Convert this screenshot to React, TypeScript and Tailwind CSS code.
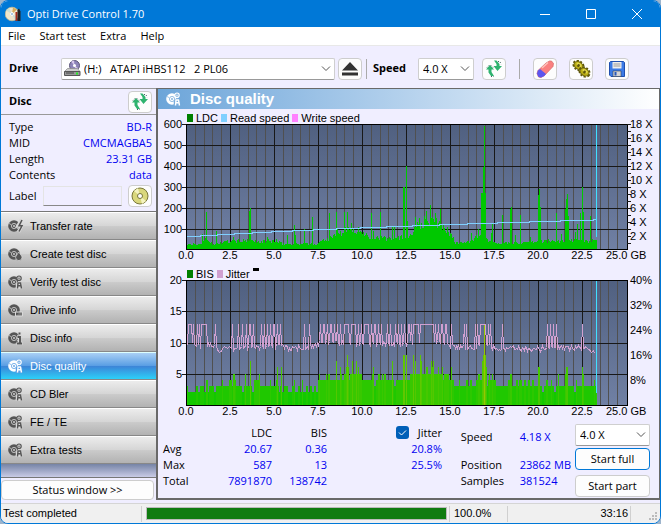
import type { ReactNode } from "react";

// Chart columns are one pixel wide, x counts from the left edge of the plot
type Point = [number, number];

const PLOT_W = 441;
const PLOT_H = 125;
const END = 411;

// small deterministic jitter, so that the bars look like measured data
const noise = (i: number) => {
  const n = Math.sin(i * 12.9898 + 4.1) * 43758.5453;
  return n - Math.floor(n);
};

const sample = (points: Point[], x: number) => {
  for (let i = 1; i < points.length; i++) {
    const [x0, y0] = points[i - 1];
    const [x1, y1] = points[i];
    if (x <= x1) return y0 + ((y1 - y0) * (x - x0)) / (x1 - x0);
  }
  return points[points.length - 1][1];
};

const ldcBase: Point[] = [
  [0, 4], [14, 5], [19, 11], [23, 8], [26, 4], [38, 7], [54, 8], [66, 8], [72, 7], [88, 8],
  [96, 5], [104, 5], [130, 5], [136, 9], [150, 13], [157, 18], [166, 18], [174, 18], [182, 13],
  [200, 10], [209, 13], [216, 12], [225, 15], [229, 26], [240, 27], [252, 26], [259, 18],
  [264, 17], [269, 6], [285, 7], [290, 12], [298, 13], [302, 8], [311, 6], [340, 6], [358, 8],
  [380, 8], [411, 8],
];

const ldcSpikes: Point[] = [
  [0, 60], [16, 15], [20, 37], [30, 18], [47, 12], [63, 38], [64, 41], [81, 12], [90, 10], [101, 14],
  [108, 24], [109, 14], [118, 20], [126, 32], [143, 36], [150, 37], [151, 20], [158, 37], [161, 37],
  [165, 26], [185, 36], [187, 18], [194, 37], [206, 23], [208, 22], [217, 62], [218, 62], [220, 83],
  [221, 28], [229, 30], [233, 31], [240, 38], [244, 44], [249, 36], [254, 40], [255, 25], [285, 16],
  [292, 20], [295, 56], [296, 56], [297, 82], [298, 123], [299, 56], [305, 16], [306, 26], [316, 34],
  [324, 40], [325, 42], [329, 14], [334, 34], [344, 12], [352, 54], [353, 60], [354, 42], [370, 36],
  [375, 15], [379, 40], [380, 50], [381, 55], [382, 33], [389, 17], [391, 25], [394, 36], [396, 62],
  [397, 37], [404, 33],
];

const bisBase: Point[] = [
  [0, 2], [12, 2.2], [28, 2.4], [40, 3], [90, 3.1], [98, 2.4], [131, 2.5], [133, 3.9], [149, 4],
  [155, 4.9], [176, 4.8], [182, 4], [214, 4], [225, 4.8], [236, 5.2], [262, 5], [267, 3.2],
  [287, 3.2], [296, 5], [302, 3.6], [313, 3.1], [350, 3], [362, 3], [411, 3.1],
];

const bisSpikes: Point[] = [
  [0, 5], [20, 4], [21, 4], [36, 4], [43, 4], [47, 5], [48, 5], [59, 5], [64, 7], [73, 5], [84, 4],
  [91, 6], [95, 6], [108, 4], [116, 4], [132, 4], [133, 5], [140, 5], [150, 7], [154, 6], [160, 6],
  [161, 8], [162, 6], [166, 7], [170, 7], [172, 6], [187, 6], [196, 5], [206, 7], [217, 8], [218, 8],
  [220, 8], [227, 8], [229, 7], [234, 8], [235, 7], [245, 7], [247, 7], [252, 6], [256, 6], [265, 6],
  [273, 4], [284, 4], [296, 7], [297, 8], [298, 13], [299, 8], [300, 6], [303, 5], [306, 5],
  [324, 5], [325, 5], [333, 4], [352, 6], [353, 6], [365, 4], [372, 5], [379, 5], [380, 6], [381, 6],
  [390, 4], [396, 6], [397, 5], [408, 4],
];

const peak = (spikes: Point[], x: number) =>
  Math.max(0, ...spikes.filter((s) => s[0] === x).map((s) => s[1]));

const columns = Array.from({ length: END }, (_, i) => i);

const ldc = columns.map((x) =>
  Math.round(Math.max(sample(ldcBase, x) * (0.75 + 0.5 * noise(x)), peak(ldcSpikes, x))),
);

const bis = columns.map((x) =>
  Math.max(2, Math.round(sample(bisBase, x) + (noise((x >> 1) + 900) - 0.5) * 1.3), peak(bisSpikes, x)),
);

// columns at which the jitter trace goes up to 13
const jitterHigh: Point[] = [
  [2, 5], [7, 7], [11, 11], [13, 13], [15, 20], [29, 29], [46, 46], [52, 52], [56, 56], [60, 60],
  [63, 64], [67, 67], [75, 75], [78, 78], [81, 81], [84, 84], [87, 88], [91, 91], [94, 94],
  [118, 118], [123, 123], [134, 134], [137, 138], [141, 141], [144, 145], [148, 148], [151, 151],
  [154, 154], [158, 162], [165, 169], [172, 172], [175, 175], [178, 182], [185, 185], [188, 189],
  [192, 192], [195, 195], [201, 201], [204, 204], [209, 209], [212, 212], [215, 215], [218, 218],
  [222, 223], [225, 225], [227, 232], [234, 247], [249, 249], [252, 252], [255, 256], [259, 260],
  [265, 265], [278, 278], [280, 280], [289, 289], [291, 291], [294, 299], [302, 302], [304, 304],
  [316, 316], [361, 361], [364, 364], [367, 367], [370, 370], [396, 396],
];

const jitterCalm: Point[] = [
  [0, 9.6], [28, 9.6], [32, 8.9], [44, 9], [60, 9.2], [76, 9.4], [98, 9.5], [105, 9], [128, 9.4],
  [134, 10], [260, 10], [268, 9.4], [288, 9.3], [300, 10], [308, 9.2], [345, 9], [360, 9.2],
  [390, 9.3], [400, 9.3], [408, 8.6],
];

const jitterPoints = columns
  .slice(0, 409)
  .map((x) => {
    const high = jitterHigh.some(([a, b]) => x >= a && x <= b);
    const value = high ? 13 : sample(jitterCalm, x) + (noise(x + 300) - 0.5) * 0.9;
    return `${x + 0.5},${Math.round(PLOT_H - value * 6.25) + 0.5}`;
  })
  .join(" ");

// read speed goes up one pixel at each of these columns
const speedSteps = [0, 14, 31, 48, 66, 85, 106, 127, 150, 174, 200, 226, 253, 281, 311, 343, 374, 407, 411];
const speedPoints = speedSteps
  .slice(0, -1)
  .map((x, i) => `${x},${112.5 - i} ${speedSteps[i + 1]},${112.5 - i}`)
  .join(" ");

const gb = ["0.0", "2.5", "5.0", "7.5", "10.0", "12.5", "15.0", "17.5", "20.0", "22.5", "25.0 GB"];

type Tick = { y: number; label: string };

const ldcTicks: Tick[] = [600, 500, 400, 300, 200, 100].map((v, i) => ({ y: i * 21, label: String(v) }));
const speedTicks: Tick[] = [18, 16, 14, 12, 10, 8, 6, 4, 2].map((v, i) => ({ y: i * 14, label: `${v} X` }));
const bisTicks: Tick[] = [20, 15, 10, 5].map((v, i) => ({ y: Math.round(i * 31.25), label: String(v) }));
const jitterTicks: Tick[] = [40, 32, 24, 16, 8].map((v, i) => ({ y: i * 25, label: `${v}%` }));

function Chart({
  id,
  label,
  left,
  right,
  marks,
  children,
}: {
  id: string;
  label: string;
  left: Tick[];
  right: Tick[];
  marks?: boolean;
  children: ReactNode;
}) {
  return (
    <svg
      viewBox="0 0 501 138"
      role="img"
      aria-label={label}
      className="block h-auto w-full overflow-visible font-['Liberation_Sans',sans-serif] text-[11px]"
    >
      <defs>
        <linearGradient id={id} x1="0" y1="0" x2="0" y2="1">
          <stop offset="0" stopColor="#506080" />
          <stop offset="1" stopColor="#7080a4" />
        </linearGradient>
      </defs>
      <g transform="translate(28 0)">
        <rect width={PLOT_W} height={PLOT_H} fill={`url(#${id})`} />
        <g shapeRendering="crispEdges">
          {Array.from({ length: 49 }, (_, i) => i + 1).map((i) => (
            <rect
              key={i}
              x={Math.round(i * 8.8)}
              width="1"
              height={PLOT_H}
              fill={i % 5 === 0 ? "#181818" : "#505050"}
            />
          ))}
          {left.map((t) => (
            <rect key={t.y} x="-4" y={t.y} width={PLOT_W + 4} height="1" fill="#181818" />
          ))}
          {children}
          <path d={`M0 0H${PLOT_W}V${PLOT_H}H0Z`} fill="none" stroke="#000" />
          {marks &&
            Array.from({ length: 18 }, (_, i) => (
              <rect key={i} x={PLOT_W} y={i * 7} width="4" height="1" fill="#181818" />
            ))}
          <rect x="410" y="1" width="1" height={PLOT_H - 13} fill="#40e0ff" />
        </g>
        {left.map((t) => (
          <text key={t.label} x="-4" y={t.y + 4} textAnchor="end">
            {t.label}
          </text>
        ))}
        {right.map((t) => (
          <text key={t.label} x="444" y={t.y + 4}>
            {t.label}
          </text>
        ))}
        {gb.map((t, i) => (
          <text
            key={t}
            x={i === 10 ? 420 : i * 44}
            y="135"
            textAnchor={i === 10 ? "start" : "middle"}
          >
            {t}
          </text>
        ))}
      </g>
    </svg>
  );
}

function Legend({ items, children }: { items: { name: string; swatch: string }[]; children?: ReactNode }) {
  return (
    <div className="flex h-3 items-center gap-[3px] pl-[29px] font-['Liberation_Sans',sans-serif] text-[11px] leading-3">
      {items.map((item) => (
        <span key={item.name} className="flex items-center gap-[3px]">
          <span className={`h-2 w-1.5 ${item.swatch}`} />
          {item.name}
        </span>
      ))}
      {children}
    </div>
  );
}

type Badge = "bolt" | "drop" | "search" | "drive" | "info";

// cut is the colour of the gaps, it follows the background of the icon
function DiscIcon({ badge, cut = "#d8d8d8" }: { badge: Badge; cut?: string }) {
  return (
    <svg width="16" height="14" viewBox="0 0 16 14" fill="none" stroke="currentColor" aria-hidden="true">
      <circle cx="6" cy="7" r="5.800" fill="currentColor" stroke="none" />
      <circle cx="6" cy="7" r="2.600" stroke={cut} strokeWidth=".8" />
      <circle cx="6" cy="7" r=".9" fill={cut} stroke="none" />
      <path d="M1 4.500 3 5.500M8.500 9l2 1" stroke={cut} strokeWidth=".7" />
      {badge === "bolt" && (
        <>
          <path d="M13.500.5 10 7h3.500L10.500 13" stroke={cut} strokeWidth="3.600" />
          <path d="M14 1 11 6.800H14L11 12.500" strokeWidth="1.500" />
        </>
      )}
      {badge === "drop" && (
        <path
          d="M10.500 5c2 2.500 3.500 3.700 3.500 5.400a3.200 3.200 0 0 1-6.400 0c0-1.500 1.900-2.900 2.900-5.400Z"
          fill="currentColor"
          stroke={cut}
          strokeWidth=".8"
        />
      )}
      {badge === "search" && (
        <>
          <path d="M8.500 14V9L11 6.500 13.500 9v5Z" fill={cut} stroke={cut} strokeWidth="1.500" />
          <circle cx="11" cy="3.200" r="2.200" fill={cut} strokeWidth="1.200" />
          <path d="M9.500 13.500 10 8h2.500l1 5.500M10 10.800h3" strokeWidth="1.400" />
          <path d="M10 3.200h2" strokeWidth=".8" />
        </>
      )}
      {badge === "drive" && (
        <path d="M7.500 9h7v4h-7Z" fill="currentColor" fillOpacity=".7" stroke={cut} strokeWidth="1" />
      )}
      {badge === "info" && (
        <>
          <path d="M11.500 1v2.500M9 6h2.500v6M8.500 12.500H14.500" stroke={cut} strokeWidth="3.600" />
          <path d="M11.500 1.500v2M9.500 6h2.500v6M9 12.500H14" strokeWidth="1.900" />
        </>
      )}
    </svg>
  );
}

function RefreshIcon() {
  return (
    <svg width="18" height="18" viewBox="0 0 18 18" aria-hidden="true">
      <path d="M1 9.500 5 5 9 9.500H6.500V12L9 16H6L3.500 12.500V9.500Z" fill="#2fb36f" />
      <path d="M8.500 6 12.500 11 17 6H14.500V4L11.500.5H9L11.500 4V6Z" fill="#2fb36f" />
      <path d="M2 7.500 5 4.500l4 4M6 16.500h3M13 1.500h2l1 3" fill="none" stroke="#466" strokeDasharray="1 1.500" />
    </svg>
  );
}

function DriveIcon() {
  return (
    <svg width="17" height="17" viewBox="0 0 17 17" aria-hidden="true">
      <circle cx="10.500" cy="5.500" r="5" fill="#8d84b8" stroke="#5c5678" />
      <path d="M10.500 5.500 7 1.500l3-1ZM10.500 5.500l4 3-3 2Z" fill="#d8c8ee" />
      <circle cx="10.500" cy="5.500" r="1.500" fill="#fff" />
      <path d="M3.500 8.500h10l2.500 3H.5Z" fill="#ccc" stroke="#888" strokeWidth=".7" />
      <path d="M.5 11.500h15.500v4H.5Z" fill="#999" stroke="#555" />
      <path d="M2 13h8" stroke="#444" />
      <path d="M12 13.500h2" stroke="#2e2" strokeWidth="2" />
    </svg>
  );
}

function AppIcon() {
  return (
    <svg width="17" height="16" viewBox="0 0 17 16" aria-hidden="true">
      <circle cx="7" cy="8" r="6.800" fill="#efe6cc" stroke="#c7b98f" strokeWidth=".8" />
      <path d="M7 8 1 4.500 4 2ZM7 8l6 3.500-3 2.500Z" fill="#c9ddd5" />
      <path d="M7 8 8 1.500l4 2Z" fill="#d7ad5c" />
      <circle cx="7" cy="8" r="1.500" fill="#8fb5d5" stroke="#fff" />
      <path d="M10.500 6h2v9h-2Z" fill="#a32b1c" />
      <path d="M12.500 4 14 2.500l1.500 3V15h-3Z" fill="#222" />
    </svg>
  );
}

// one tilted cog, drawn twice
function Cog({ x, y }: { x: number; y: number }) {
  return (
    <g transform={`translate(${x} ${y}) rotate(35)`}>
      <ellipse rx="5.200" ry="4" fill="none" stroke="#5e570a" strokeWidth="2.400" strokeDasharray="2 1.400" />
      <ellipse rx="4.800" ry="3.600" fill="#b9ad16" stroke="#6b640c" />
      <ellipse rx="3" ry="1.600" cy="-1" fill="#e2d84c" />
      <ellipse rx="1.300" ry="1.600" fill="#5e570a" />
    </g>
  );
}

function GearsIcon() {
  return (
    <svg width="19" height="18" viewBox="0 0 19 18" aria-hidden="true">
      <Cog x={6.5} y={5.5} />
      <Cog x={12.5} y={12} />
    </svg>
  );
}

function EraserIcon() {
  return (
    <svg width="18" height="18" viewBox="0 0 18 18" aria-hidden="true">
      <path d="M10 3 13.500 1h2L17.500 3.500 17 6.500 8.500 15.500 5 17.500 2.500 17 1 13.500 2 10.500Z" fill="#fa8080" stroke="#d26a6a" strokeWidth=".7" />
      <path d="M2 10.500 4 9l6 5-2 2.200L5 17.500 2.500 17 1 13.500Z" fill="#5c55ef" />
      <path d="m6 8 6-5.500" stroke="#ffc0b8" strokeWidth="1.500" />
    </svg>
  );
}

function SaveIcon() {
  return (
    <svg width="16" height="16" viewBox="0 0 16 16" aria-hidden="true">
      <path d="M1.500.5h13l1 1v14H2L.5 14V1.500Z" fill="#3c7be6" stroke="#1f4fae" />
      <path d="M3.500 1h9v6.500h-9Z" fill="#eee" />
      <path d="M4.500 3h7M4.500 5h7" stroke="#999" />
      <path d="M4 10h8v5.500H4Z" fill="#d5d5d5" stroke="#345" strokeWidth=".6" />
      <path d="M5.500 11h2v3.500h-2Z" fill="#2859b5" />
    </svg>
  );
}

function Chevron() {
  return (
    <svg
      className="pointer-events-none absolute top-1/2 right-1 -translate-y-1/2"
      width="10"
      height="6"
      viewBox="0 0 10 6"
      fill="none"
      stroke="#555"
      aria-hidden="true"
    >
      <path d="m1 .5 4 4 4-4" />
    </svg>
  );
}

function ToolButton({ label, children }: { label: string; children: ReactNode }) {
  return (
    <button
      aria-label={label}
      className="flex h-[22px] w-6 shrink-0 items-center justify-center rounded border border-[#cdcdcd] bg-[#fdfdfd]"
    >
      {children}
    </button>
  );
}

const selectStyle =
  "h-[22px] w-full appearance-none rounded-xs border border-[#cfcfcf] border-b-[#999] bg-white text-[11px] leading-4";

const nav: { name: string; badge: Badge }[] = [
  { name: "Transfer rate", badge: "bolt" },
  { name: "Create test disc", badge: "drop" },
  { name: "Verify test disc", badge: "search" },
  { name: "Drive info", badge: "drive" },
  { name: "Disc info", badge: "info" },
  { name: "Disc quality", badge: "search" },
  { name: "CD Bler", badge: "search" },
  { name: "FE / TE", badge: "search" },
  { name: "Extra tests", badge: "search" },
];

const disc = [
  ["Type", "BD-R"],
  ["MID", "CMCMAGBA5"],
  ["Length", "23.31 GB"],
  ["Contents", "data"],
];

const totals = [
  ["Avg", "20.67", "0.36", "20.8%"],
  ["Max", "587", "13", "25.5%"],
  ["Total", "7891870", "138742", ""],
];

function TitleBar() {
  return (
    <header className="flex h-[26px] items-center bg-[#0078d7] pr-[18px] pl-1 text-white">
      <AppIcon />
      <h1 className="ml-[5px] flex-1">Opti Drive Control 1.70</h1>
      <div className="flex items-center gap-9">
        <button aria-label="Minimize">
          <svg width="10" height="10" viewBox="0 0 10 10" stroke="currentColor"><path d="M0 5.500h10" /></svg>
        </button>
        <button aria-label="Maximize">
          <svg width="10" height="10" viewBox="0 0 10 10" fill="none" stroke="currentColor"><path d="M.5.5h9v9h-9Z" /></svg>
        </button>
        <button aria-label="Close">
          <svg width="10" height="10" viewBox="0 0 10 10" stroke="currentColor"><path d="m0 0 10 10M10 0 0 10" /></svg>
        </button>
      </div>
    </header>
  );
}

function Toolbar() {
  return (
    <div className="flex h-[43px] items-center border-t border-[#e8e8e8] pt-[3px] pr-[31px] pl-2">
      <label htmlFor="drive" className="w-[52px] font-bold">Drive</label>
      <div className="relative flex-1">
        <span className="pointer-events-none absolute top-[2px] left-[3px]"><DriveIcon /></span>
        <select id="drive" className={`${selectStyle} pl-[22px]`}>
          <option>{"(H:)\u00a0\u00a0\u00a0ATAPI iHBS112\u00a0\u00a0\u00a02 PL06"}</option>
        </select>
        <Chevron />
      </div>
      <div className="ml-[3px] flex items-center">
        <ToolButton label="Eject">
          <svg width="16" height="14" viewBox="0 0 16 14" fill="#333" aria-hidden="true">
            <path d="M8 0 16 8.500H0ZM0 10.500h16v3H0Z" />
          </svg>
        </ToolButton>
      </div>
      <span className="mx-1 h-5 w-px bg-[#aaa]" />
      <label htmlFor="speed" className="ml-0.5 w-[45px] font-bold">Speed</label>
      <div className="relative mr-2 w-14">
        <select id="speed" className={`${selectStyle} pl-1`}>
          <option>4.0 X</option>
        </select>
        <Chevron />
      </div>
      <ToolButton label="Refresh"><RefreshIcon /></ToolButton>
      <span className="mx-[13px] h-5 w-px bg-[#aaa]" />
      <div className="flex gap-3">
        <ToolButton label="Erase"><EraserIcon /></ToolButton>
        <ToolButton label="Options"><GearsIcon /></ToolButton>
        <ToolButton label="Save"><SaveIcon /></ToolButton>
      </div>
    </div>
  );
}

function Sidebar() {
  return (
    <aside className="flex w-[155px] shrink-0 flex-col">
      <div className="flex h-[27px] items-center justify-between border-y border-[#999] pr-1 pl-2">
        <h2 className="font-bold">Disc</h2>
        <ToolButton label="Refresh disc"><RefreshIcon /></ToolButton>
      </div>
      <dl className="mt-1 pr-1 pl-2">
        {disc.map(([name, value]) => (
          <div key={name} className="flex h-4 items-center justify-between leading-4">
            <dt>{name}</dt>
            <dd className="text-[#0000f0]">{value}</dd>
          </div>
        ))}
      </dl>
      <div className="flex h-7 items-center pr-1 pb-0.5 pl-2">
        <label htmlFor="label" className="w-[34px]">Label</label>
        <input
          id="label"
          className="mr-1.5 h-5 w-0 flex-1 border border-[#e4e4e4] border-b-[#888] bg-[#f0eeff]"
        />
        <ToolButton label="Write label">
          <svg width="18" height="18" viewBox="0 0 18 18" aria-hidden="true">
            <circle cx="9" cy="9" r="8" fill="#d9d77c" stroke="#77753a" />
            <path d="M9 9 3 4l4-3ZM9 9l6 5-4 3Z" fill="#f4f3c0" />
            <circle cx="9" cy="9" r="2.500" fill="#fff" stroke="#77753a" />
          </svg>
        </ToolButton>
      </div>
      <nav className="flex flex-1 flex-col border-t border-b border-[#777] font-['Liberation_Sans',sans-serif] text-[11px]">
        {nav.map(({ name, badge }) => (
          <button
            key={name}
            className={
              name === "Disc quality"
                ? "flex h-7 shrink-0 items-center gap-1.5 border-t border-b border-t-[#dff] border-b-[#888] bg-[linear-gradient(#a9cff5,#5b9fe4_48%,#3c86d8_52%,#2cd0f8)] pl-[7px] text-white"
                : "flex h-7 shrink-0 items-center gap-1.5 border-t border-b border-t-white border-b-[#888] bg-[linear-gradient(#ececec,#d6d6d6_48%,#cacaca_52%,#b2b2b2)] pl-[7px]"
            }
          >
            <span className={name === "Disc quality" ? "text-white" : "text-[#555]"}>
              <DiscIcon badge={badge} cut={name === "Disc quality" ? "#5b9fe4" : undefined} />
            </span>
            {name}
          </button>
        ))}
        <div className="min-h-[13px] flex-1 bg-linear-to-b from-[#7684a6] to-[#c9cbe6]" />
      </nav>
      <button className="mt-0.5 mr-0.5 h-5 rounded border border-[#cdcdcd] bg-[#fdfdfd] leading-4">
        Status window &gt;&gt;
      </button>
    </aside>
  );
}

function Results() {
  return (
    <div className="flex pt-1.5 pr-[9px] pl-[5px] leading-4">
      <table className="h-fit">
        <thead>
          <tr className="h-[17px]">
            <td className="w-12 p-0" />
            <th scope="col" className="w-[61px] p-0 text-right font-normal">LDC</th>
            <th scope="col" className="w-[55px] p-0 text-right font-normal">BIS</th>
            <th scope="col" className="w-[115px] p-0 font-normal">
              <label className="flex items-center justify-end gap-[9px]">
                <input type="checkbox" defaultChecked className="peer sr-only" />
                <svg width="13" height="13" viewBox="0 0 13 13" fill="none" aria-hidden="true">
                  <rect width="13" height="13" rx="3" fill="#005fb8" />
                  <path d="m3 6.500 2.500 2.500L10 4.500" stroke="#fff" />
                </svg>
                Jitter
              </label>
            </th>
          </tr>
        </thead>
        <tbody>
          {totals.map(([name, ...values]) => (
            <tr key={name} className="h-4">
              <th scope="row" className="p-0 text-left font-normal">{name}</th>
              {values.map((value, i) => (
                <td key={i} className="p-0 text-right text-[#0000f0]">{value}</td>
              ))}
            </tr>
          ))}
        </tbody>
      </table>
      <dl className="mt-[5px] mr-1 ml-auto grid h-fit grid-cols-[59px_auto]">
        <dt className="mb-3">Speed</dt>
        <dd className="text-[#0000f0]">4.18 X</dd>
        <dt>Position</dt>
        <dd className="text-[#0000f0]">23862 MB</dd>
        <dt>Samples</dt>
        <dd className="text-[#0000f0]">381524</dd>
      </dl>
      <div className="flex w-[75px] flex-col">
        <div className="relative">
          <select aria-label="Test speed" className={`${selectStyle} block pl-1`}>
            <option>4.0 X</option>
          </select>
          <Chevron />
        </div>
        <button className="mt-[2px] h-[22px] rounded border border-[#0078d7] bg-[#fdfdfd]">Start full</button>
        <button className="mt-[5px] h-[22px] rounded border border-[#cdcdcd] bg-[#fdfdfd]">Start part</button>
      </div>
    </div>
  );
}

function DiscQuality() {
  return (
    <main className="min-w-0 flex-1 border-t border-r border-b-2 border-l-2 border-[#696969]">
      <div className="flex h-5 items-center gap-2 bg-linear-to-r from-[#6ca5d9] to-white pl-2 text-white">
        <DiscIcon badge="search" cut="#78acdc" />
        <h2 className="font-['Liberation_Sans',sans-serif] text-[15px] leading-4 font-bold">Disc quality</h2>
      </div>
      <div className="mt-[3px]">
        <Legend
          items={[
            { name: "LDC", swatch: "bg-[#008000]" },
            { name: "Read speed", swatch: "bg-[#80d0ff]" },
            { name: "Write speed", swatch: "bg-[#ff80ff]" },
          ]}
        />
        <Chart id="ldc-bg" label="LDC and read speed" left={ldcTicks} right={speedTicks} marks>
          {ldc.map((h, x) => (
            <rect key={x} x={x} y={PLOT_H - h} width="1" height={h} fill="#00c800" />
          ))}
          <polyline points={speedPoints} fill="none" stroke="#80d0ff" />
        </Chart>
      </div>
      <div className="mt-1.5">
        <Legend
          items={[
            { name: "BIS", swatch: "bg-[#008000]" },
            { name: "Jitter", swatch: "bg-[#d0a0d0]" },
          ]}
        >
          <span className="h-[3px] w-1.5 self-start bg-black" />
        </Legend>
        <Chart id="bis-bg" label="BIS and jitter" left={bisTicks} right={jitterTicks}>
          {bis.map((v, x) => (
            <rect
              key={x}
              x={x}
              y={PLOT_H - Math.round(v * 6.25)}
              width="1"
              height={Math.round(v * 6.25)}
              fill={`rgb(${Math.min(150, v * 13 - 8)} 200 0)`}
            />
          ))}
          <polyline points={jitterPoints} fill="none" stroke="#d0a0d0" />
        </Chart>
      </div>
      <Results />
    </main>
  );
}

function StatusBar() {
  return (
    <footer className="flex h-5 items-center border-t border-[#d5d5d5] bg-[#f0f0f0] pl-0.5 font-['Liberation_Sans',sans-serif] text-[11px]">
      <span className="w-[138px]">Test completed</span>
      <div className="h-4 w-px bg-[#d0d0d0]" />
      <div
        role="progressbar"
        aria-label="Test progress"
        aria-valuenow={100}
        className="ml-1 h-[13px] flex-1 border border-[#bcbcbc] bg-[#107c10]"
      />
      <div className="ml-0.5 h-4 w-px bg-[#d0d0d0]" />
      <span className="w-[57px] pl-1">100.0%</span>
      <div className="h-4 w-px bg-[#d0d0d0]" />
      <span className="w-[122px] pr-0.5 text-right">33:16</span>
      <div className="h-4 w-px bg-[#d0d0d0]" />
      <svg className="ml-[18px] self-end" width="11" height="11" viewBox="0 0 11 11" fill="#bbb" aria-hidden="true">
        <path d="M6 0h2v2H6ZM6 3h2v2H6ZM3 3h2v2H3ZM6 6h2v2H6ZM3 6h2v2H3ZM0 6h2v2H0Z" />
      </svg>
    </footer>
  );
}

export default function App() {
  return (
    <div className="min-h-screen bg-[#9db4cc]">
      <div className="flex min-h-screen flex-col overflow-hidden rounded-lg border border-[#0078d7] bg-[#f0eeff] font-['Open_Sans','Noto_Sans',sans-serif] text-[11px] text-black">
        <TitleBar />
        <nav className="flex h-[18px] items-center gap-[14px] bg-white pl-[7px] leading-4">
          <button>File</button>
          <button>Start test</button>
          <button>Extra</button>
          <button>Help</button>
        </nav>
        <Toolbar />
        <div className="flex flex-1 pb-[3px]">
          <Sidebar />
          <DiscQuality />
        </div>
        <StatusBar />
      </div>
    </div>
  );
}
